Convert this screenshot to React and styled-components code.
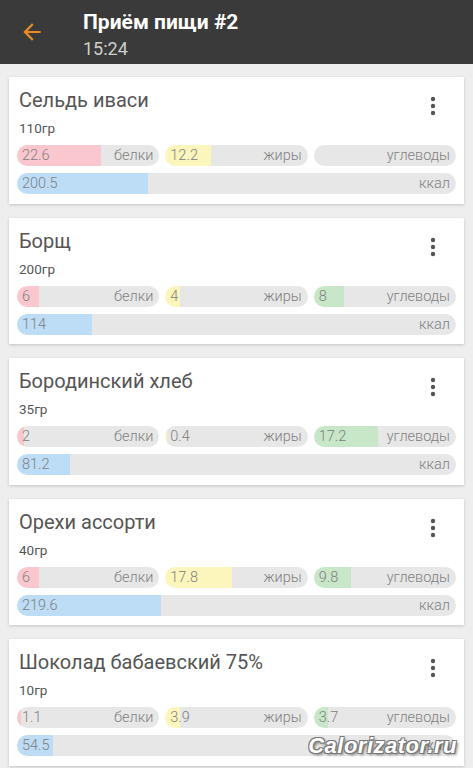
import React from "react";
import styled, { createGlobalStyle } from "styled-components";

const GlobalStyle = createGlobalStyle`
  html, body {
    margin: 0;
    padding: 0;
    background: #eeeeee;
    font-family: Roboto, "Noto Sans", "Liberation Sans", sans-serif;
  }
`;

const Page = styled.div`
  position: relative;
  width: 473px;
  height: 768px;
  overflow: hidden;
  background: #eeeeee;
`;

const Toolbar = styled.header`
  height: 64px;
  box-sizing: border-box;
  background: #3a3a3a;
  display: flex;
  align-items: flex-start;
  padding-top: 10px;
`;

const BackButton = styled.button`
  width: 64px;
  height: 44px;
  margin-right: 19px;
  border: none;
  background: none;
  padding: 0;
  display: flex;
  align-items: center;
  justify-content: center;
  color: #e88b25;
`;

const TitleBlock = styled.div`
  display: flex;
  flex-direction: column;
`;

const Title = styled.h1`
  margin: 0;
  font-size: 21px;
  line-height: 24px;
  font-weight: 700;
  color: #ffffff;
`;

const Subtitle = styled.div`
  margin-top: 4px;
  font-size: 18px;
  line-height: 22px;
  color: #cfcfcf;
`;

const List = styled.main`
  display: flex;
  flex-direction: column;
  gap: 14px;
  padding: 13px 9px;
`;

const Card = styled.section`
  background: #ffffff;
  box-shadow: 0 1px 3px rgba(0, 0, 0, 0.18);
  padding: 10px 8px 9.5px;
`;

const CardHead = styled.div`
  display: grid;
  grid-template-columns: 1fr auto;
  padding-left: 2px;
  margin-bottom: 8px;
`;

const Name = styled.h2`
  margin: 0 0 6px;
  font-size: 20px;
  line-height: 26px;
  font-weight: 400;
  color: #555555;
`;

const Weight = styled.div`
  font-size: 13.5px;
  line-height: 18px;
  color: #555555;
`;

const MenuButton = styled.button`
  grid-column: 2;
  grid-row: 1 / span 2;
  align-self: start;
  width: 24px;
  height: 24px;
  margin-top: 7px;
  margin-right: 11px;
  padding: 0;
  border: none;
  background: none;
  display: flex;
  align-items: center;
  justify-content: center;
  color: #555555;
`;

const Macros = styled.div`
  display: grid;
  grid-template-columns: repeat(3, 1fr);
  gap: 6px;
  margin-bottom: 7px;
`;

const Bar = styled.div`
  height: 21px;
  border-radius: 11px;
  background: linear-gradient(
    to right,
    ${(p) => p.$tone} ${(p) => p.$pct}%,
    #e7e7e7 ${(p) => p.$pct}%
  );
  display: flex;
  align-items: center;
  justify-content: space-between;
  padding: 0 6px 0 5px;
  font-size: 14.5px;
  font-weight: 300;
  color: #808080;
  white-space: nowrap;
`;

const Watermark = styled.div`
  position: absolute;
  right: 16px;
  bottom: 9px;
  font-family: "Liberation Sans", Arial, sans-serif;
  font-size: 22px;
  font-weight: 700;
  font-style: italic;
  color: #ffffff;
  letter-spacing: 0.5px;
  text-shadow: -1px -1px 0 #777, 1px -1px 0 #777, -1px 1px 0 #777,
    1px 1px 0 #777, 2px 2px 3px rgba(0, 0, 0, 0.5);
`;

const tones = {
  p: "#f9c7cd",
  f: "#fcf6bd",
  c: "#c8e6c8",
  k: "#bddcf6",
};

const MACRO_MAX = 38;
const KCAL_MAX = 670;

const foods = [
  { name: "Сельдь иваси", weight: "110гр", p: 22.6, f: 12.2, c: null, k: 200.5 },
  { name: "Борщ", weight: "200гр", p: 6, f: 4, c: 8, k: 114 },
  { name: "Бородинский хлеб", weight: "35гр", p: 2, f: 0.4, c: 17.2, k: 81.2 },
  { name: "Орехи ассорти", weight: "40гр", p: 6, f: 17.8, c: 9.8, k: 219.6 },
  { name: "Шоколад бабаевский 75%", weight: "10гр", p: 1.1, f: 3.9, c: 3.7, k: 54.5 },
];

function ArrowBack() {
  return (
    <svg width="26" height="26" viewBox="0 0 24 24" fill="currentColor">
      <path d="M20 11H7.83l5.59-5.59L12 4l-8 8 8 8 1.41-1.41L7.83 13H20v-2z" />
    </svg>
  );
}

function MoreVert() {
  return (
    <svg width="24" height="24" viewBox="0 0 24 24" fill="currentColor">
      <circle cx="12" cy="5" r="2.2" />
      <circle cx="12" cy="12" r="2.2" />
      <circle cx="12" cy="19" r="2.2" />
    </svg>
  );
}

function MacroBar({ value, label, tone, max }) {
  const pct = value == null ? 0 : Math.min(100, (value / max) * 100);
  return (
    <Bar $tone={tone} $pct={pct.toFixed(2)}>
      <span>{value == null ? "" : value}</span>
      <span>{label}</span>
    </Bar>
  );
}

function FoodCard({ food }) {
  return (
    <Card>
      <CardHead>
        <Name>{food.name}</Name>
        <Weight>{food.weight}</Weight>
        <MenuButton aria-label="menu">
          <MoreVert />
        </MenuButton>
      </CardHead>
      <Macros>
        <MacroBar value={food.p} label="белки" tone={tones.p} max={MACRO_MAX} />
        <MacroBar value={food.f} label="жиры" tone={tones.f} max={MACRO_MAX} />
        <MacroBar value={food.c} label="углеводы" tone={tones.c} max={MACRO_MAX} />
      </Macros>
      <MacroBar value={food.k} label="ккал" tone={tones.k} max={KCAL_MAX} />
    </Card>
  );
}

export default function App() {
  return (
    <>
      <GlobalStyle />
      <Page>
        <Toolbar>
          <BackButton aria-label="back">
            <ArrowBack />
          </BackButton>
          <TitleBlock>
            <Title>Приём пищи #2</Title>
            <Subtitle>15:24</Subtitle>
          </TitleBlock>
        </Toolbar>
        <List>
          {foods.map((food) => (
            <FoodCard key={food.name} food={food} />
          ))}
        </List>
        <Watermark>Calorizator.ru</Watermark>
      </Page>
    </>
  );
}
